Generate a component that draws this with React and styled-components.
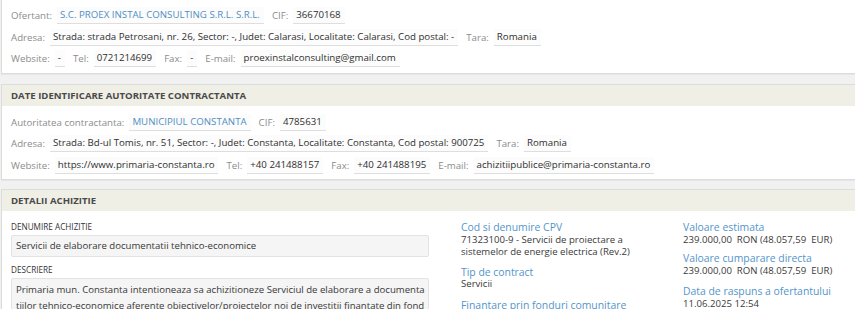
import React from "react";
import styled, { createGlobalStyle } from "styled-components";

const GlobalStyle = createGlobalStyle`
    html, body {
        margin: 0;
        padding: 0;
        background: #f1f1f1;
        font-family: "Open Sans", "DejaVu Sans", sans-serif;
        color: #333;
    }
`

const Page = styled.div`
    width: 855px;
    height: 309px;
    overflow: hidden;
    padding-left: 1px;
    box-sizing: border-box;
`

const Panel = styled.section`
    background: #fff;
    border: 1px solid #dcdcdc;
    border-top: ${props => props.cut ? "none" : "1px solid #dcdcdc"};
    border-right: none;
    margin-bottom: ${props => props.gap || 9}px;
    box-shadow: 0 1px 1px rgba(0, 0, 0, 0.04);
`

const Header = styled.div`
    background: #efefe6;
    height: 21px;
    line-height: 21px;
    padding-left: 9px;
    font-size: 9.6px;
    font-weight: 700;
    color: #4a4a4a;
    text-transform: uppercase;
`

const Body = styled.div`
    padding: ${props => props.pad || "4px 0 4px 9px"};
`

const Row = styled.div`
    display: flex;
    align-items: center;
    height: 21.5px;
    font-size: 9.7px;
    white-space: nowrap;
`

const Label = styled.span`
    color: #8c8c8c;
    margin-right: 5px;
`

const Value = styled.span`
    color: ${props => props.link ? "#4f8fc4" : "#2f2f2f"};
    border-bottom: 1px solid #dedede;
    background: #fcfcfc;
    line-height: 14px;
    padding: 1px 4px 1px 3px;
    margin-right: 8px;
`

const Details = styled.div`
    display: grid;
    grid-template-columns: 418px 190px 1fr;
    column-gap: 32px;
    padding: 10px 0 0 9px;
`

const Col = styled.div`
    display: flex;
    flex-direction: column;
`

const SmallTitle = styled.div`
    font-size: 8.2px;
    color: #333;
    text-transform: uppercase;
    line-height: 12px;
    margin-bottom: 2px;
`

const Box = styled.div`
    background: #f5f5f5;
    border: 1px solid #e3e3e3;
    border-radius: 2px;
    padding: ${props => props.multi ? "3px 3px 3px 4px" : "0 4px"};
    height: ${props => props.multi ? "auto" : "20px"};
    line-height: ${props => props.multi ? "16px" : "20px"};
    font-size: 9.6px;
    color: #383838;
    margin-bottom: 7px;
    word-break: break-all;
`

const Info = styled.div`
    margin-bottom: ${props => props.gap || 7}px;
`

const InfoTitle = styled.div`
    color: #5495c9;
    font-size: 10.4px;
    line-height: 12.5px;
`

const InfoText = styled.div`
    color: #3a3a3a;
    font-size: 9.6px;
    line-height: 12px;
`

const Field = ({ label, children, link }) => (
    <>
        <Label>{label}</Label>
        <Value link={link}>{children}</Value>
    </>
);

class App extends React.Component
{
    render() {
        return (
            <Page>
                <GlobalStyle />
                <Panel cut gap={10}>
                    <Body pad="5px 0 3px 9px">
                        <Row>
                            <Field label="Ofertant:" link>S.C. PROEX INSTAL CONSULTING S.R.L. S.R.L.</Field>
                            <Field label="CIF:">36670168</Field>
                        </Row>
                        <Row>
                            <Field label="Adresa:">Strada: strada Petrosani, nr. 26, Sector: -, Judet: Calarasi, Localitate: Calarasi, Cod postal: -</Field>
                            <Field label="Tara:">Romania</Field>
                        </Row>
                        <Row>
                            <Field label="Website:">-</Field>
                            <Field label="Tel:">0721214699</Field>
                            <Field label="Fax:">-</Field>
                            <Field label="E-mail:">proexinstalconsulting@gmail.com</Field>
                        </Row>
                    </Body>
                </Panel>
                <Panel gap={9}>
                    <Header>Date identificare autoritate contractanta</Header>
                    <Body pad="6px 0 3px 9px">
                        <Row>
                            <Field label="Autoritatea contractanta:" link>MUNICIPIUL CONSTANTA</Field>
                            <Field label="CIF:">4785631</Field>
                        </Row>
                        <Row>
                            <Field label="Adresa:">Strada: Bd-ul Tomis, nr. 51, Sector: -, Judet: Constanta, Localitate: Constanta, Cod postal: 900725</Field>
                            <Field label="Tara:">Romania</Field>
                        </Row>
                        <Row>
                            <Field label="Website:">https://www.primaria-constanta.ro</Field>
                            <Field label="Tel:">+40 241488157</Field>
                            <Field label="Fax:">+40 241488195</Field>
                            <Field label="E-mail:">achizitiipublice@primaria-constanta.ro</Field>
                        </Row>
                    </Body>
                </Panel>
                <Panel gap={0}>
                    <Header>Detalii achizitie</Header>
                    <Details>
                        <Col>
                            <SmallTitle>Denumire achizitie</SmallTitle>
                            <Box>Servicii de elaborare documentatii tehnico-economice</Box>
                            <SmallTitle>Descriere</SmallTitle>
                            <Box multi>
                                Primaria mun. Constanta intentioneaza sa achizitioneze Serviciul de elaborare a documentatiilor tehnico-economice aferente obiectivelor/proiectelor noi de investitii finantate din fonduri
                            </Box>
                        </Col>
                        <Col>
                            <Info gap={8}>
                                <InfoTitle>Cod si denumire CPV</InfoTitle>
                                <InfoText>71323100-9 - Servicii de proiectare a sistemelor de energie electrica (Rev.2)</InfoText>
                            </Info>
                            <Info gap={9}>
                                <InfoTitle>Tip de contract</InfoTitle>
                                <InfoText>Servicii</InfoText>
                            </Info>
                            <Info>
                                <InfoTitle>Finantare prin fonduri comunitare</InfoTitle>
                                <InfoText>NU</InfoText>
                            </Info>
                        </Col>
                        <Col>
                            <Info gap={6.5}>
                                <InfoTitle>Valoare estimata</InfoTitle>
                                <InfoText>239.000,00&nbsp; RON (48.057,59&nbsp; EUR)</InfoText>
                            </Info>
                            <Info gap={8.5}>
                                <InfoTitle>Valoare cumparare directa</InfoTitle>
                                <InfoText>239.000,00&nbsp; RON (48.057,59&nbsp; EUR)</InfoText>
                            </Info>
                            <Info>
                                <InfoTitle>Data de raspuns a ofertantului</InfoTitle>
                                <InfoText>11.06.2025 12:54</InfoText>
                            </Info>
                        </Col>
                    </Details>
                </Panel>
            </Page>
        );
    }
}

export default App;
